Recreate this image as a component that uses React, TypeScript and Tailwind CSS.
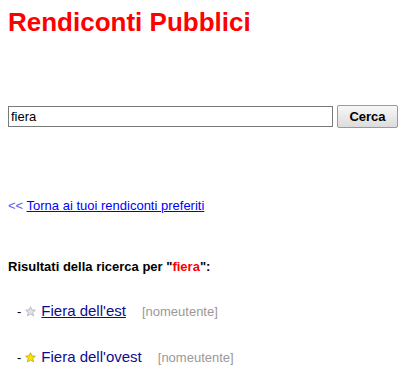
import React from "react";

const Star = ({ filled }: { filled: boolean }) => (
  <svg
    viewBox="0 0 24 24"
    className="inline-block w-[11px] h-[11px] ml-[4px] align-[-1px]"
  >
    <path
      d="M12 1.5l3.1 6.9 7.4.7-5.6 5 1.7 7.4L12 17.6l-6.6 3.9 1.7-7.4-5.6-5 7.4-.7z"
      fill={filled ? "#ffe600" : "#e4e4e4"}
      stroke={filled ? "#b59b00" : "#a8a8a8"}
      strokeWidth="1.6"
      strokeLinejoin="round"
    />
  </svg>
);

const results = [
  { id: 1, title: "Fiera dell'est", user: "nomeutente", fav: false, underline: true },
  { id: 2, title: "Fiera dell'ovest", user: "nomeutente", fav: true, underline: false },
];

const App = () => {
  return (
    <div className="w-[420px] h-[387px] bg-white pl-2 pt-[7px] font-['Liberation_Sans',Arial,sans-serif] text-black overflow-hidden">
      <h1 className="text-[26px] leading-[30px] font-bold text-[#ff0000]">Rendiconti Pubblici</h1>

      <form className="flex items-center h-[23px] mt-[68px]" onSubmit={(e) => e.preventDefault()}>
        <input
          type="text"
          defaultValue="fiera"
          className="w-[325px] h-[21px] border border-[#7a7a7a] px-[2px] text-[13px] leading-[15px] outline-none"
        />
        <button
          type="submit"
          className="ml-[4px] w-[61px] h-[23px] border border-[#9a9a9a] rounded-[2px] bg-gradient-to-b from-[#f8f8f8] to-[#dcdcdc] text-[13px] font-bold"
        >
          Cerca
        </button>
      </form>

      <div className="mt-[70px] text-[13px] leading-[15px]">
        <span className="text-[#5a5af0]">&lt;&lt; </span>
        <a href="#" className="text-[#0000ff] underline">Torna ai tuoi rendiconti preferiti</a>
      </div>

      <div className="mt-[46px] text-[13px] leading-[15px] font-bold">
        Risultati della ricerca per "<span className="text-[#ff0000]">fiera</span>":
      </div>

      {results.map((r, i) => (
        <div
          key={r.id}
          className={`pl-[9px] text-[15px] leading-[18px] ${i === 0 ? "mt-[28px]" : "mt-[27px]"}`}
        >
          <span className="text-[13px]">-</span>
          <Star filled={r.fav} />
          <a href="#" className={`ml-[5px] text-[#0c0c8c] ${r.underline ? "underline" : "no-underline"}`}>
            {r.title}
          </a>
          <span className="ml-[16px] text-[13px] text-[#999999]">[{r.user}]</span>
        </div>
      ))}
    </div>
  );
};

export default App;
